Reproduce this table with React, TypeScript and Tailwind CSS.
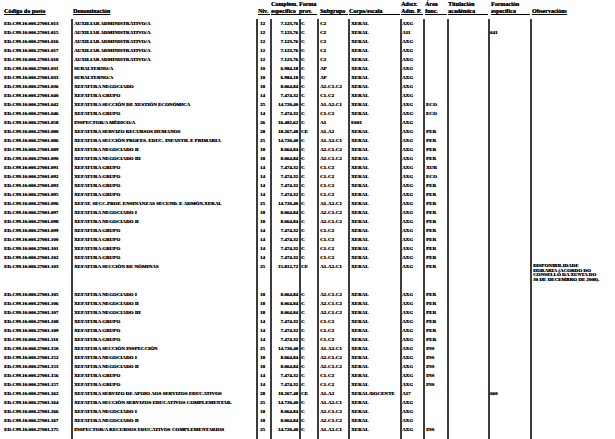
const grid =
  "grid grid-cols-[71px_185px_14px_29px_18px_31px_52px_23px_24px_41px_42px_85px]";

// [posto, denominación, nivel, complemento, forma, subgrupo, corpo, adscrición, área, titulación, formación]
const rows: string[][] = [
  ["013", "AUXILIAR ADMINISTRATIVO/A", "12", "7.123,76", "C", "C2", "XERAL", "AXG", "", "", ""],
  ["015", "AUXILIAR ADMINISTRATIVO/A", "12", "7.123,76", "C", "C2", "XERAL", "A11", "", "", "641"],
  ["016", "AUXILIAR ADMINISTRATIVO/A", "12", "7.123,76", "C", "C2", "XERAL", "AXG", "", "", ""],
  ["017", "AUXILIAR ADMINISTRATIVO/A", "12", "7.123,76", "C", "C2", "XERAL", "AXG", "", "", ""],
  ["018", "AUXILIAR ADMINISTRATIVO/A", "12", "7.123,76", "C", "C2", "XERAL", "AXG", "", "", ""],
  ["031", "SUBALTERNO/A", "10", "6.984,18", "C", "AP", "XERAL", "AXG", "", "", ""],
  ["033", "SUBALTERNO/A", "10", "6.984,18", "C", "AP", "XERAL", "AXG", "", "", ""],
  ["036", "XEFATURA NEGOCIADO", "18", "8.064,84", "C", "A2-C1-C2", "XERAL", "AXG", "", "", ""],
  ["040", "XEFATURA GRUPO", "14", "7.474,32", "C", "C1-C2", "XERAL", "AXG", "", "", ""],
  ["042", "XEFATURA SECCIÓN DE XESTIÓN ECONÓMICA", "25", "14.720,40", "C", "A1-A2-C1", "XERAL", "AXG", "ECO", "", ""],
  ["046", "XEFATURA GRUPO", "14", "7.474,32", "C", "C1-C2", "XERAL", "AXG", "ECO", "", ""],
  ["058", "INSPECTOR/A MÉDICO/A", "26", "16.482,62", "C", "A1", "E601", "AXG", "", "", ""],
  ["080", "XEFATURA SERVIZO RECURSOS HUMANOS", "28", "18.267,48", "CE", "A1-A2", "XERAL", "AXG", "PER", "", ""],
  ["086", "XEFATURA SECCIÓN PROFES. EDUC. INFANTIL E PRIMARIA", "25", "14.720,40", "C", "A1-A2-C1", "XERAL", "AXG", "PER", "", ""],
  ["089", "XEFATURA NEGOCIADO II", "18", "8.064,84", "C", "A2-C1-C2", "XERAL", "AXG", "PER", "", ""],
  ["090", "XEFATURA NEGOCIADO III", "18", "8.064,84", "C", "A2-C1-C2", "XERAL", "AXG", "PER", "", ""],
  ["091", "XEFATURA GRUPO", "14", "7.474,32", "C", "C1-C2", "XERAL", "AXG", "XUR", "", ""],
  ["092", "XEFATURA GRUPO", "14", "7.474,32", "C", "C1-C2", "XERAL", "AXG", "ECO", "", ""],
  ["093", "XEFATURA GRUPO", "14", "7.474,32", "C", "C1-C2", "XERAL", "AXG", "PER", "", ""],
  ["095", "XEFATURA GRUPO", "14", "7.474,32", "C", "C1-C2", "XERAL", "AXG", "PER", "", ""],
  ["096", "XEFAT. SECC.PROF. ENSINANZAS SECUND. E ADMÓN.XERAL", "25", "14.720,40", "C", "A1-A2-C1", "XERAL", "AXG", "PER", "", ""],
  ["097", "XEFATURA NEGOCIADO I", "18", "8.064,84", "C", "A2-C1-C2", "XERAL", "AXG", "PER", "", ""],
  ["098", "XEFATURA NEGOCIADO II", "18", "8.064,84", "C", "A2-C1-C2", "XERAL", "AXG", "PER", "", ""],
  ["099", "XEFATURA GRUPO", "14", "7.474,32", "C", "C1-C2", "XERAL", "AXG", "PER", "", ""],
  ["100", "XEFATURA GRUPO", "14", "7.474,32", "C", "C1-C2", "XERAL", "AXG", "PER", "", ""],
  ["101", "XEFATURA GRUPO", "14", "7.474,32", "C", "C1-C2", "XERAL", "AXG", "PER", "", ""],
  ["102", "XEFATURA GRUPO", "14", "7.474,32", "C", "C1-C2", "XERAL", "AXG", "PER", "", ""],
  ["103", "XEFATURA SECCIÓN DE NÓMINAS", "25", "15.812,72", "CE", "A1-A2-C1", "XERAL", "AXG", "PER", "", ""],
  ["105", "XEFATURA NEGOCIADO I", "18", "8.064,84", "C", "A2-C1-C2", "XERAL", "AXG", "PER", "", ""],
  ["106", "XEFATURA NEGOCIADO II", "18", "8.064,84", "C", "A2-C1-C2", "XERAL", "AXG", "PER", "", ""],
  ["107", "XEFATURA NEGOCIADO III", "18", "8.064,84", "C", "A2-C1-C2", "XERAL", "AXG", "PER", "", ""],
  ["108", "XEFATURA GRUPO", "14", "7.474,32", "C", "C1-C2", "XERAL", "AXG", "PER", "", ""],
  ["109", "XEFATURA GRUPO", "14", "7.474,32", "C", "C1-C2", "XERAL", "AXG", "PER", "", ""],
  ["110", "XEFATURA GRUPO", "14", "7.474,32", "C", "C1-C2", "XERAL", "AXG", "PER", "", ""],
  ["150", "XEFATURA SECCIÓN INSPECCIÓN", "25", "14.720,40", "C", "A1-A2-C1", "XERAL", "AXG", "INS", "", ""],
  ["152", "XEFATURA NEGOCIADO I", "18", "8.064,84", "C", "A2-C1-C2", "XERAL", "AXG", "INS", "", ""],
  ["153", "XEFATURA NEGOCIADO II", "18", "8.064,84", "C", "A2-C1-C2", "XERAL", "AXG", "INS", "", ""],
  ["156", "XEFATURA GRUPO", "14", "7.474,32", "C", "C1-C2", "XERAL", "AXG", "INS", "", ""],
  ["157", "XEFATURA GRUPO", "14", "7.474,32", "C", "C1-C2", "XERAL", "AXG", "INS", "", ""],
  ["162", "XEFATURA SERVIZO DE APOIO AOS SERVIZOS EDUCATIVOS", "28", "18.267,48", "CE", "A1-A2", "XERAL/DOCENTE", "A17", "", "", "660"],
  ["164", "XEFATURA SECCIÓN SERVIZOS EDUCATIVOS COMPLEMENTAR.", "25", "14.720,40", "C", "A1-A2-C1", "XERAL", "AXG", "", "", ""],
  ["166", "XEFATURA NEGOCIADO I", "18", "8.064,84", "C", "A2-C1-C2", "XERAL", "AXG", "", "", ""],
  ["167", "XEFATURA NEGOCIADO II", "18", "8.064,84", "C", "A2-C1-C2", "XERAL", "AXG", "", "", ""],
  ["175", "INSPECTOR/A RECURSOS EDUCATIVOS COMPLEMENTARIOS", "25", "14.720,40", "C", "A1-A2-C1", "XERAL", "AXG", "INS", "", ""],
];

const observacions: Record<string, string[]> = {
  "103": ["DISPONIBILIDADE", "HORARIA (ACORDO DO", "CONSELLO DA XUNTA DO", "30 DE DECEMBRO DE 2008)."],
};

// column rules: 2px of dark grey read like the antialiased 1.5px rules of the source
const line = "border-l-2 border-[#3c3c3c]";

function DataRow({ r }: { r: string[] }) {
  const obs = observacions[r[0]];
  return (
    <div className={`${grid} ${obs ? "h-[28px]" : "h-[9px]"} leading-[9px]`}>
      <div className="pl-[4px]">ED.C99.10.000.27001.{r[0]}</div>
      <div className={`${line} pl-[1px]`}>{r[1]}</div>
      <div className={`${line} pl-[2px]`}>{r[2]}</div>
      <div className={`${line} pr-[1px] text-right`}>{r[3]}</div>
      <div className={`${line}`}>{r[4]}</div>
      <div className={`${line} pl-[1px]`}>{r[5]}</div>
      <div className={`${line} pl-[1px]`}>{r[6]}</div>
      <div className={`${line}`}>{r[7]}</div>
      <div className={`${line} pl-[1px]`}>{r[8]}</div>
      <div className={`${line}`}>{r[9]}</div>
      <div className={`${line}`}>{r[10]}</div>
      <div className={`${line} pl-[1px]`}>
        {obs && (
          <div className="pt-[2px] leading-[4.7px]">
            {obs.map((o) => (
              <div key={o}>{o}</div>
            ))}
          </div>
        )}
      </div>
    </div>
  );
}

function Head({ top, bottom, className }: { top?: string; bottom: string; className?: string }) {
  return (
    <div className={`flex flex-col ${className ?? ""}`}>
      <span className="h-[7px] leading-[7px]">{top ?? ""}</span>
      <span className="h-[7px] leading-[7px]">{bottom}</span>
    </div>
  );
}

export default function App() {
  return (
    <div className="h-[439px] w-[615px] overflow-hidden whitespace-nowrap bg-white font-['Liberation_Serif',serif] font-bold text-black [text-shadow:0.25px_0_0_#000]">
      <div className={`${grid} h-[19px] pt-[1px] text-[6px]`}>
        <Head bottom="Código do posto" className="pl-[4px] [&>span:last-child]:underline" />
        <Head bottom="Denominación" className="pl-[2px] [&>span:last-child]:underline" />
        <Head bottom="Niv." className="pl-[2px] [&>span:last-child]:border-b [&>span:last-child]:border-black" />
        <Head top="Complem." bottom="específico" className="pl-[1px] [&>span:last-child]:border-b [&>span:last-child]:border-black" />
        <Head top="Forma" bottom="prov." className="[&>span:last-child]:border-b [&>span:last-child]:border-black" />
        <Head bottom="Subgrupo" className="pl-[3px] [&>span:last-child]:border-b [&>span:last-child]:border-black" />
        <Head bottom="Corpo/escala" className="pl-[1px] [&>span:last-child]:border-b [&>span:last-child]:border-black" />
        <Head top="Adscr." bottom="Adm. P." className="pl-[1px] [&>span:last-child]:border-b [&>span:last-child]:border-black" />
        <Head top="Área" bottom="func." className="pl-[2px] [&>span:last-child]:border-b [&>span:last-child]:border-black" />
        <Head top="Titulación" bottom="académica" className="pl-[1px] [&>span:last-child]:border-b [&>span:last-child]:border-black" />
        <Head top="Formación" bottom="específica" className="pl-[3px] [&>span:last-child]:border-b [&>span:last-child]:border-black" />
        <Head bottom="Observacións" className="pl-[2px] [&>span:last-child]:underline" />
      </div>
      <div className="text-[5px]">
        {rows.map((r) => (
          <DataRow key={r[0]} r={r} />
        ))}
        <div className={`${grid} h-[20px]`}>
          <div />
          {Array.from({ length: 11 }).map((_, i) => (
            <div key={i} className={line} />
          ))}
        </div>
      </div>
    </div>
  );
}
